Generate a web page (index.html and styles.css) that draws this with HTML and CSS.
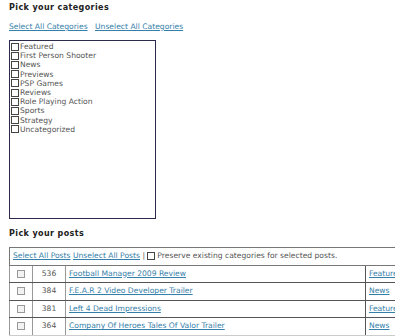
FILE: index.html
```html
<!DOCTYPE html>
<html lang="en">
<head>
    <meta charset="UTF-8">
    <title>Bulk Categories</title>
    <link rel="stylesheet" href="styles.css">
</head>
<body>

<div class="page">
    <h3 class="section-title">Pick your categories</h3>
    <div class="links">
        <a href="#">Select All Categories</a>
        <a href="#">Unselect All Categories</a>
    </div>

    <div class="cat-box">
        <label><input type="checkbox"> Featured</label>
        <label><input type="checkbox"> First Person Shooter</label>
        <label><input type="checkbox"> News</label>
        <label><input type="checkbox"> Previews</label>
        <label><input type="checkbox"> PSP Games</label>
        <label><input type="checkbox"> Reviews</label>
        <label><input type="checkbox"> Role Playing Action</label>
        <label><input type="checkbox"> Sports</label>
        <label><input type="checkbox"> Strategy</label>
        <label><input type="checkbox"> Uncategorized</label>
    </div>

    <h3 class="section-title posts-title">Pick your posts</h3>
    <table class="posts">
        <tr class="head">
            <td colspan="4">
                <a href="#">Select All Posts</a> <a href="#">Unselect All Posts</a> |
                <label class="keep"><input type="checkbox"> Preserve existing categories for selected posts.</label>
            </td>
        </tr>
        <tr>
            <td class="cb"><input type="checkbox" class="light"></td>
            <td class="id">536</td>
            <td class="title"><a href="#">Football Manager 2009 Review</a></td>
            <td class="cat"><a href="#">Features</a></td>
        </tr>
        <tr>
            <td class="cb"><input type="checkbox" class="light"></td>
            <td class="id">384</td>
            <td class="title"><a href="#">F.E.A.R 2 Video Developer Trailer</a></td>
            <td class="cat"><a href="#">News</a></td>
        </tr>
        <tr>
            <td class="cb"><input type="checkbox" class="light"></td>
            <td class="id">381</td>
            <td class="title"><a href="#">Left 4 Dead Impressions</a></td>
            <td class="cat"><a href="#">Features</a></td>
        </tr>
        <tr>
            <td class="cb"><input type="checkbox" class="light"></td>
            <td class="id">364</td>
            <td class="title"><a href="#">Company Of Heroes Tales Of Valor Trailer</a></td>
            <td class="cat"><a href="#">News</a></td>
        </tr>
    </table>
</div>

</body>
</html>
```

FILE: styles.css
```css
body {
    margin: 0;
    font-family: "DejaVu Sans", Verdana, sans-serif;
    font-size: 7.6px;
    color: #555;
    background: #fff;
    overflow: hidden;
}
.page {
    padding: 2px 0 0 9px;
    width: 440px;
}
a {
    color: #3580aa;
    text-decoration: underline;
}
.section-title {
    margin: 0;
    font-size: 8px;
    font-weight: bold;
    letter-spacing: 0.4px;
    color: #222;
    line-height: 11px;
}
.links {
    margin-top: 9px;
    line-height: 10px;
}
.links a {
    margin-right: 5px;
}
.cat-box {
    margin-top: 8px;
    width: 145px;
    height: 176px;
    border: 1px solid #2b2a4a;
    padding-top: 1px;
}
.cat-box label {
    display: flex;
    align-items: center;
    gap: 1px;
    height: 9.2px;
    padding-left: 1px;
}
input[type="checkbox"] {
    appearance: none;
    margin: 0;
    width: 8px;
    height: 8px;
    border: 1px solid #444;
    background: #fff;
    box-sizing: border-box;
}
input.light {
    border-color: #999;
    background: #f2f2f2;
}
.posts-title {
    margin-top: 9px;
}
.posts {
    margin-top: 8px;
    border-collapse: collapse;
    width: 440px;
}
.posts td {
    border: 1px solid #555;
    height: 16.5px;
    padding: 0 3px;
    line-height: 10px;
}
.posts .head td {
    border-color: #777;
}
.keep {
    display: inline-flex;
    align-items: center;
    gap: 2px;
    vertical-align: middle;
}
.posts td.cb {
    width: 16px;
    text-align: center;
    border-left-color: #999;
    border-right-color: #999;
}
.posts td.cb input {
    display: block;
    margin: 0 auto;
}
.posts td.id {
    width: 26px;
    text-align: center;
    border-right-color: #999;
}
.posts td.title {
    width: 293px;
}
.posts tr:last-child td {
    border-bottom: 3px solid #ccc;
}
```
